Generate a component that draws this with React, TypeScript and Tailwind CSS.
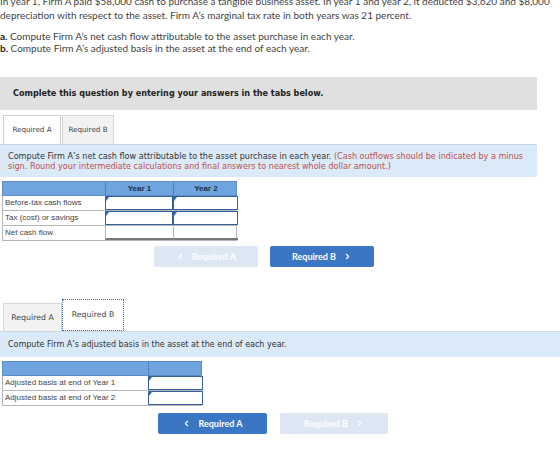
import React from 'react';
import { ChevronLeft, ChevronRight } from 'lucide-react';

const verdana = "font-['DejaVu_Sans',Verdana,sans-serif]";
const arial = "font-['Liberation_Sans',Arial,sans-serif]";

function Triangle() {
  return <span className="absolute left-0 top-0 h-0 w-0 border-t-[4px] border-r-[3px] border-t-[#2c66b8] border-r-transparent" />;
}

function InputCell({ width, marker = true }: { width: string; marker?: boolean }) {
  return (
    <div className={`relative ${width} h-full border border-[#35609c] bg-white`}>
      {marker && <Triangle />}
    </div>
  );
}

function NavButton({ label, dir, active }: { label: string; dir: 'prev' | 'next'; active: boolean }) {
  return (
    <button
      className={`flex h-full w-full items-center justify-center gap-[7px] rounded-[2px] font-['Lato',sans-serif] text-[9px] font-bold ${
        active ? 'bg-[#3a76c3] text-white' : 'bg-[#dde7f3] text-white'
      }`}
    >
      {dir === 'prev' && <ChevronLeft size={9} strokeWidth={3} />}
      <span>{label}</span>
      {dir === 'next' && <ChevronRight size={9} strokeWidth={3} />}
    </button>
  );
}

export default function App() {
  return (
    <div className="relative h-[451px] w-[560px] overflow-hidden bg-white text-[#333]">
      {/* problem statement */}
      <div className="-mt-[5px] font-['Lato',sans-serif] text-[10px] leading-[12px] text-[#444]">
        <p className="whitespace-nowrap">
          In year 1, Firm A paid $58,000 cash to purchase a tangible business asset. In year 1 and year 2, it deducted $3,620 and $8,000
        </p>
        <p className="mt-[2px] whitespace-nowrap">
          depreciation with respect to the asset. Firm A&rsquo;s marginal tax rate in both years was 21 percent.
        </p>
        <div className="mt-[9px]">
          <p>
            <b className="text-[#222]">a.</b> Compute Firm A&rsquo;s net cash flow attributable to the asset purchase in each year.
          </p>
          <p>
            <b className="text-[#222]">b.</b> Compute Firm A&rsquo;s adjusted basis in the asset at the end of each year.
          </p>
        </div>
      </div>

      {/* instructions banner */}
      <div className={`mt-[23px] flex h-[33px] w-[537px] items-center bg-[#e0e0e0] pl-[13px] ${verdana} text-[8.1px] font-bold text-[#222]`}>
        Complete this question by entering your answers in the tabs below.
      </div>

      {/* Required A panel */}
      <div className={`mt-[5px] flex h-[29px] items-end pl-[3px] ${verdana} text-[7.2px] text-[#444]`}>
        <div className="flex h-[29px] w-[58px] items-center justify-center border border-b-0 border-[#cfcfcf] bg-white">Required A</div>
        <div className="ml-[1px] flex h-[29px] w-[52px] items-center justify-center border border-b-0 border-[#d6d6d6] bg-[#f2f2f2]">Required B</div>
      </div>
      <div className={`flex h-[33px] w-[537px] flex-col justify-center border-t border-[#c9d6e3] bg-[#dbeaf8] pl-[8px] ${verdana} text-[8.1px] leading-[10px] text-[#333]`}>
        <p className="whitespace-nowrap">
          Compute Firm A&rsquo;s net cash flow attributable to the asset purchase in each year.{' '}
          <span className="text-[#c0504d]">(Cash outflows should be indicated by a minus</span>
        </p>
        <p className="whitespace-nowrap text-[#c0504d]">
          sign. Round your intermediate calculations and final answers to nearest whole dollar amount.)
        </p>
      </div>

      <div className={`ml-[2px] mt-[4px] w-[235px] ${arial} text-[8px]`}>
        <div className="grid h-[15px] grid-cols-[102px_68px_65px] border border-[#5d8ccb] bg-[#6fa4df] font-bold text-[#1d2d45]">
          <div />
          <div className="flex items-center justify-center border-l border-[#4f7fbf]">Year 1</div>
          <div className="flex items-center justify-center border-l border-[#4f7fbf]">Year 2</div>
        </div>
        {['Before-tax cash flows', 'Tax (cost) or savings'].map((row) => (
          <div key={row} className="grid h-[15px] grid-cols-[102px_68px_65px] border-x border-b border-[#b5b5b5] text-[#444]">
            <div className="flex items-center pl-[2px]">{row}</div>
            <InputCell width="w-full" />
            <InputCell width="w-full" />
          </div>
        ))}
        <div className="grid h-[15px] grid-cols-[102px_68px_65px] border-x border-b border-[#b5b5b5] text-[#444]">
          <div className="flex items-center pl-[2px]">Net cash flow</div>
          <div className="border-l border-b-2 border-[#b5b5b5] border-b-[#777]" />
          <div className="border-l border-b-2 border-[#b5b5b5] border-b-[#777]" />
        </div>
      </div>

      <div className="mt-[5px] flex h-[21px] pl-[154px]">
        <div className="w-[104px]">
          <NavButton label="Required A" dir="prev" active={false} />
        </div>
        <div className="ml-[12px] w-[104px]">
          <NavButton label="Required B" dir="next" active />
        </div>
      </div>

      {/* Required B panel */}
      <div className={`mt-[32px] flex h-[32px] items-end pl-[3px] ${verdana} text-[7.8px] text-[#444]`}>
        <div className="flex h-[28px] w-[59px] items-center justify-center border border-b-0 border-[#d6d6d6] bg-[#f2f2f2]">Required A</div>
        <div className="flex h-[32px] w-[62px] items-center justify-center border border-dotted border-[#3566a8] bg-white">Required B</div>
      </div>
      <div className={`flex h-[26px] w-[560px] items-center border-t border-[#c9d6e3] bg-[#dbeaf8] pl-[8px] ${verdana} text-[8px] text-[#333]`}>
        Compute Firm A&rsquo;s adjusted basis in the asset at the end of each year.
      </div>

      <div className={`ml-[2px] mt-[4px] w-[200px] ${arial} text-[8px] text-[#444]`}>
        <div className="grid h-[15px] grid-cols-[145px_55px] border border-[#5d8ccb] bg-[#6fa4df]">
          <div />
          <div className="border-l border-[#4f7fbf]" />
        </div>
        {['Adjusted basis at end of Year 1', 'Adjusted basis at end of Year 2'].map((row) => (
          <div key={row} className="grid h-[15px] grid-cols-[145px_55px] border-x border-b border-[#b5b5b5]">
            <div className="flex items-center pl-[2px]">{row}</div>
            <InputCell width="w-full" />
          </div>
        ))}
      </div>

      <div className="mt-[7px] flex h-[21px] pl-[158px]">
        <div className="w-[109px]">
          <NavButton label="Required A" dir="prev" active />
        </div>
        <div className="ml-[13px] w-[108px]">
          <NavButton label="Required B" dir="next" active={false} />
        </div>
      </div>
    </div>
  );
}
